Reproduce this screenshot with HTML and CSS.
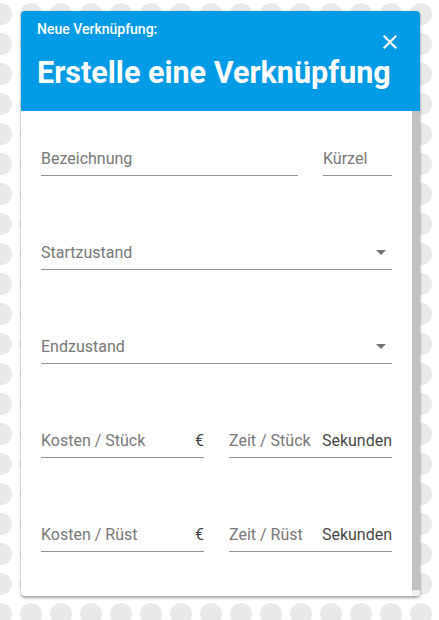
FILE: index.html
```html
<!DOCTYPE html>
<html lang="de">
<head>
<meta charset="utf-8">
<title>Erstelle eine Verknüpfung</title>
<link rel="stylesheet" href="styles.css">
</head>
<body>
<div class="dialog">
  <header class="dialog-header">
    <div class="dialog-sub">Neue Verknüpfung:</div>
    <h1 class="dialog-title">Erstelle eine Verknüpfung</h1>
    <button class="close-btn" aria-label="Schließen">
      <svg viewBox="0 0 24 24" width="24" height="24"><path d="M19 6.41 17.59 5 12 10.59 6.41 5 5 6.41 10.59 12 5 17.59 6.41 19 12 13.41 17.59 19 19 17.59 13.41 12z" fill="#fff"/></svg>
    </button>
  </header>
  <div class="dialog-body">
    <div class="dialog-content">
      <div class="row">
        <div class="field grow"><span class="label">Bezeichnung</span></div>
        <div class="field short"><span class="label">Kürzel</span></div>
      </div>
      <div class="row">
        <div class="field grow"><span class="label">Startzustand</span><span class="arrow"></span></div>
      </div>
      <div class="row">
        <div class="field grow"><span class="label">Endzustand</span><span class="arrow"></span></div>
      </div>
      <div class="row">
        <div class="field half"><span class="label">Kosten / Stück</span><span class="suffix">€</span></div>
        <div class="field half"><span class="label">Zeit / Stück</span><span class="suffix">Sekunden</span></div>
      </div>
      <div class="row">
        <div class="field half"><span class="label">Kosten / Rüst</span><span class="suffix">€</span></div>
        <div class="field half"><span class="label">Zeit / Rüst</span><span class="suffix">Sekunden</span></div>
      </div>
    </div>
    <div class="scrollbar"><div class="scrollbar-thumb"></div></div>
  </div>
</div>
</body>
</html>
```

FILE: styles.css
```css
html, body {
  margin: 0;
  padding: 0;
  height: 100%;
}
body {
  font-family: Roboto, "Liberation Sans", sans-serif;
  background-color: #fff;
  background-image: radial-gradient(circle at center, #e9e9e9 10.5px, rgba(233,233,233,0) 11.5px);
  background-size: 30px 30px;
  background-position: -14px -1px;
  padding-top: 11px;
  box-sizing: border-box;
  overflow: hidden;
}
.dialog {
  margin-left: 21px;
  width: 399px;
  height: 585px;
  background: #fff;
  border-radius: 4px;
  box-shadow: 0 2px 3px rgba(0,0,0,0.35), 0 0 2px rgba(0,0,0,0.12);
  display: flex;
  flex-direction: column;
  overflow: hidden;
}
.dialog-header {
  position: relative;
  background: #039be5;
  color: #fff;
  height: 100px;
  box-sizing: border-box;
  padding: 10px 16px 0 16px;
  flex: none;
}
.dialog-sub {
  font-size: 14px;
  font-weight: 500;
  line-height: 16px;
}
.dialog-title {
  margin: 18px 0 0 0;
  font-size: 30.5px;
  font-weight: 700;
  line-height: 35px;
}
.close-btn {
  position: absolute;
  top: 19px;
  right: 18px;
  width: 24px;
  height: 24px;
  padding: 0;
  border: 0;
  background: none;
  display: block;
}
.close-btn svg { display: block; }
.dialog-body {
  flex: 1;
  display: flex;
  min-height: 0;
}
.dialog-content {
  flex: 1;
  padding: 38px 20px 0 20px;
  display: flex;
  flex-direction: column;
  gap: 67px;
  overflow: hidden;
}
.scrollbar {
  width: 8px;
  flex: none;
  background: #f1f1f1;
}
.scrollbar-thumb {
  height: 479px;
  background: #c1c1c1;
}
.row {
  display: flex;
  gap: 25px;
  flex: none;
}
.field {
  display: flex;
  align-items: flex-start;
  height: 26px;
  border-bottom: 1px solid #949494;
  font-size: 16px;
  line-height: 19px;
}
.grow { flex: 1; }
.short { width: 69px; flex: none; }
.half { flex: 1; }
.label {
  color: #787878;
  flex: 1;
  white-space: nowrap;
}
.suffix {
  color: rgba(0,0,0,0.76);
  white-space: nowrap;
}
.arrow {
  width: 0;
  height: 0;
  border-left: 5px solid transparent;
  border-right: 5px solid transparent;
  border-top: 5px solid #757575;
  margin: 7px 6px 0 0;
}
```
